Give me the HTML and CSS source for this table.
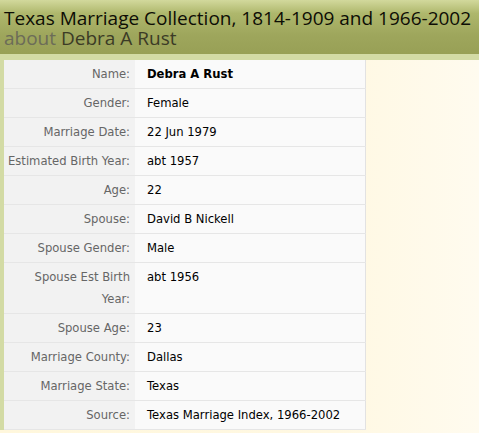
FILE: index.html
```html
<!DOCTYPE html>
<html>
<head>
<meta charset="utf-8">
<link rel="stylesheet" href="styles.css">
</head>
<body>
<div class="header">
  <div class="title">Texas Marriage Collection, 1814-1909 and 1966-2002</div>
  <div class="subtitle"><span class="about">about</span> Debra A Rust</div>
</div>
<div class="band"></div>
<div class="main">
  <table class="record">
    <tr><th>Name:</th><td class="name">Debra A Rust</td></tr>
    <tr><th>Gender:</th><td>Female</td></tr>
    <tr><th>Marriage Date:</th><td>22 Jun 1979</td></tr>
    <tr><th>Estimated Birth Year:</th><td>abt 1957</td></tr>
    <tr><th>Age:</th><td>22</td></tr>
    <tr><th>Spouse:</th><td>David B Nickell</td></tr>
    <tr><th>Spouse Gender:</th><td>Male</td></tr>
    <tr><th>Spouse Est Birth Year:</th><td>abt 1956</td></tr>
    <tr><th>Spouse Age:</th><td>23</td></tr>
    <tr><th>Marriage County:</th><td>Dallas</td></tr>
    <tr><th>Marriage State:</th><td>Texas</td></tr>
    <tr><th>Source:</th><td>Texas Marriage Index, 1966-2002</td></tr>
  </table>
</div>
</body>
</html>
```
FILE: styles.css
```css
html, body {
  margin: 0;
  padding: 0;
}
body {
  width: 479px;
  height: 433px;
  overflow: hidden;
  background: linear-gradient(to right, #fff7dc 0%, #fff8e2 70%, #fffbef 100%);
  font-family: "DejaVu Sans", Verdana, sans-serif;
}
.header {
  height: 54px;
  box-sizing: border-box;
  padding: 8px 0 0 4px;
  background: linear-gradient(to bottom, #d2d99c 0%, #aeb76c 25%, #9ea65c 65%, #98a056 100%);
  font-family: "Open Sans", sans-serif;
  font-size: 19px;
  line-height: 20px;
  white-space: nowrap;
}
.title {
  color: #0d0d05;
}
.subtitle {
  color: #3b3b26;
}
.about {
  color: #6c6c58;
}
.band {
  height: 6px;
  background: #d3dba5;
}
.main {
  display: flex;
  border-left: 4px solid #d3dba5;
}
.record {
  border-collapse: collapse;
  width: 362px;
  font-size: 11.6px;
  line-height: 22px;
  border-right: 1px solid #e2e2e2;
}
.record th {
  width: 131px;
  box-sizing: border-box;
  text-align: right;
  font-weight: normal;
  color: #666;
  background: #f2f2f2;
  padding: 3px 5px 3px 3px;
  vertical-align: top;
  border-bottom: 1px solid #e6e6e6;
}
.record td {
  background: #fafafa;
  color: #000;
  padding: 3px 6px 3px 12px;
  vertical-align: top;
  border-bottom: 1px solid #e6e6e6;
}
.record td.name {
  font-weight: bold;
}
```
